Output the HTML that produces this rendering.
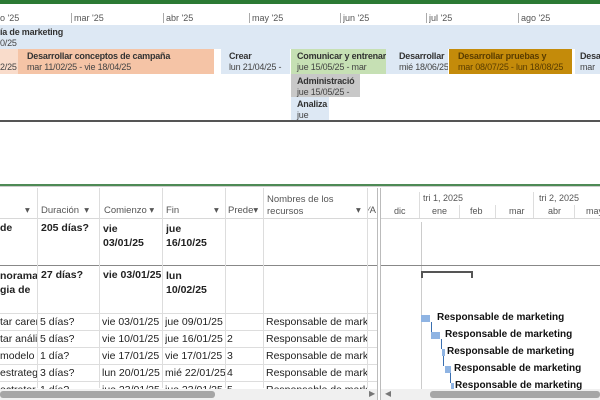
<!DOCTYPE html>
<html><head><meta charset="utf-8"><style>
*{margin:0;padding:0;box-sizing:border-box}
body{width:600px;height:400px;overflow:hidden;background:#fff;font-family:"Liberation Sans",sans-serif;position:relative;color:#222}
.a{position:absolute;white-space:nowrap;overflow:hidden}
.tl{font-size:9px;color:#555}
.bar{position:absolute;overflow:hidden;white-space:nowrap;font-size:9px;line-height:11px;padding:2px 0 0 5px;color:#444;letter-spacing:-0.2px}
.bar b{display:block;color:#333}
.c{position:absolute;font-size:10.5px;white-space:nowrap;overflow:hidden;color:#222}
.hd{font-size:9.5px;color:#555}
.g{position:absolute;font-size:10px;font-weight:bold;white-space:nowrap;color:#111}
.sq{position:absolute;width:9px;height:7px;background:#8fb4e3}
</style></head><body>
<div class="a" style="left:0;top:0;width:600px;height:4px;background:#2b7a34"></div>
<div class="a tl" style="left:0;top:13px">o '25</div>
<div class="a" style="left:71px;top:13px;width:1px;height:10px;background:#aaa"></div><div class="a tl" style="left:74px;top:13px">mar '25</div>
<div class="a" style="left:163px;top:13px;width:1px;height:10px;background:#aaa"></div><div class="a tl" style="left:166px;top:13px">abr '25</div>
<div class="a" style="left:249px;top:13px;width:1px;height:10px;background:#aaa"></div><div class="a tl" style="left:252px;top:13px">may '25</div>
<div class="a" style="left:340px;top:13px;width:1px;height:10px;background:#aaa"></div><div class="a tl" style="left:343px;top:13px">jun '25</div>
<div class="a" style="left:426px;top:13px;width:1px;height:10px;background:#aaa"></div><div class="a tl" style="left:429px;top:13px">jul '25</div>
<div class="a" style="left:518px;top:13px;width:1px;height:10px;background:#aaa"></div><div class="a tl" style="left:521px;top:13px">ago '25</div>
<div class="bar" style="left:0;top:25px;width:600px;height:24px;background:#dde8f4;padding-left:0"><b>ía de marketing</b>0/25</div>
<div class="bar" style="left:0;top:49px;width:18px;height:25px;background:#f9dccb;padding-left:0"><b>&nbsp;</b>2/25</div>
<div class="bar" style="left:18px;top:49px;width:196px;height:25px;background:#f5c4a6;padding-left:9px"><b>Desarrollar conceptos de campaña</b>mar 11/02/25 - vie 18/04/25</div>
<div class="bar" style="left:221px;top:49px;width:69px;height:25px;background:#dde8f4;padding-left:8px"><b>Crear</b>lun 21/04/25 -</div>
<div class="bar" style="left:291px;top:49px;width:95px;height:25px;background:#c6e0b4;padding-left:6px"><b>Comunicar y entrenar</b>jue 15/05/25 - mar</div>
<div class="bar" style="left:386px;top:49px;width:62px;height:25px;background:#dde8f4;padding-left:13px"><b>Desarrollar</b>mié 18/06/25</div>
<div class="bar" style="left:449px;top:49px;width:123px;height:25px;background:#c48b0a;padding-left:9px;color:#5a3d00"><b style="color:#5a3d00">Desarrollar pruebas y</b>mar 08/07/25 - lun 18/08/25</div>
<div class="bar" style="left:575px;top:49px;width:25px;height:25px;background:#dde8f4;padding-left:5px"><b>Desa</b>mar</div>
<div class="bar" style="left:291px;top:74px;width:69px;height:23px;background:#c8c8c8;padding-left:6px"><b>Administració</b>jue 15/05/25 -</div>
<div class="bar" style="left:291px;top:97px;width:38px;height:23px;background:#dde8f4;padding-left:6px"><b>Analiza</b>jue</div>
<div class="a" style="left:0;top:120px;width:600px;height:2px;background:#555"></div>
<div class="a" style="left:0;top:184px;width:600px;height:2px;background:#4e8a55"></div>
<div class="a" style="left:0;top:186px;width:600px;height:1px;background:#ccc"></div>
<div class="a" style="left:0;top:218px;width:377px;height:1px;background:#d8d8d8"></div>
<div class="a" style="left:0;top:265px;width:377px;height:1px;background:#888"></div>
<div class="a" style="left:0;top:313px;width:377px;height:1px;background:#ddd"></div>
<div class="a" style="left:0;top:330px;width:377px;height:1px;background:#ddd"></div>
<div class="a" style="left:0;top:347px;width:377px;height:1px;background:#ddd"></div>
<div class="a" style="left:0;top:364px;width:377px;height:1px;background:#ddd"></div>
<div class="a" style="left:0;top:381px;width:377px;height:1px;background:#ddd"></div>
<div class="a" style="left:37px;top:188px;width:1px;height:200px;background:#ddd"></div>
<div class="a" style="left:99px;top:188px;width:1px;height:200px;background:#ddd"></div>
<div class="a" style="left:162px;top:188px;width:1px;height:200px;background:#ddd"></div>
<div class="a" style="left:225px;top:188px;width:1px;height:200px;background:#ddd"></div>
<div class="a" style="left:263px;top:188px;width:1px;height:200px;background:#ddd"></div>
<div class="a" style="left:367px;top:188px;width:1px;height:200px;background:#ddd"></div>
<div class="a" style="left:377px;top:188px;width:1px;height:212px;background:#bbb"></div>
<div class="a" style="left:380px;top:188px;width:1px;height:212px;background:#bbb"></div>
<div class="c hd" style="left:25px;top:205px">▾</div>
<div class="c hd" style="left:41px;top:205px">Duración&nbsp;&nbsp;▾</div>
<div class="c hd" style="left:104px;top:205px">Comienzo ▾</div>
<div class="c hd" style="left:166px;top:205px">Fin</div><div class="c hd" style="left:214px;top:205px">▾</div>
<div class="c hd" style="left:228px;top:205px">Prede▾</div>
<div class="c hd" style="left:267px;top:194px;line-height:12px">Nombres de los<br>recursos</div><div class="c hd" style="left:356px;top:205px">▾</div>
<div class="c hd" style="left:368px;top:205px;width:9px">⁄A</div>
<div class="c" style="left:0;top:222px;font-weight:bold;line-height:13px">de<br>&nbsp;</div>
<div class="c" style="left:41px;top:222px;font-weight:bold">205 días?</div>
<div class="c" style="left:103px;top:222px;font-weight:bold;line-height:14px">vie<br>03/01/25</div>
<div class="c" style="left:166px;top:222px;font-weight:bold;line-height:14px">jue<br>16/10/25</div>
<div class="c" style="left:0;top:269px;font-weight:bold;line-height:14px;width:37px">norama<br>gia de</div>
<div class="c" style="left:41px;top:269px;font-weight:bold">27 días?</div>
<div class="c" style="left:103px;top:269px;font-weight:bold">vie 03/01/25</div>
<div class="c" style="left:166px;top:269px;font-weight:bold;line-height:14px">lun<br>10/02/25</div>
<div class="c" style="left:0;top:316px;width:37px">tar carer</div><div class="c" style="left:40px;top:316px">5 días?</div><div class="c" style="left:102px;top:316px;width:60px">vie 03/01/25</div><div class="c" style="left:165px;top:316px;width:60px">jue 09/01/25</div><div class="c" style="left:266px;top:316px;width:101px">Responsable de mark</div>
<div class="c" style="left:0;top:333px;width:37px">tar análi</div><div class="c" style="left:40px;top:333px">5 días?</div><div class="c" style="left:102px;top:333px;width:60px">vie 10/01/25</div><div class="c" style="left:165px;top:333px;width:60px">jue 16/01/25</div><div class="c" style="left:227px;top:333px">2</div><div class="c" style="left:266px;top:333px;width:101px">Responsable de mark</div>
<div class="c" style="left:0;top:350px;width:37px">modelo</div><div class="c" style="left:40px;top:350px">1 día?</div><div class="c" style="left:102px;top:350px;width:60px">vie 17/01/25</div><div class="c" style="left:165px;top:350px;width:60px">vie 17/01/25</div><div class="c" style="left:227px;top:350px">3</div><div class="c" style="left:266px;top:350px;width:101px">Responsable de mark</div>
<div class="c" style="left:0;top:367px;width:37px">estrateg</div><div class="c" style="left:40px;top:367px">3 días?</div><div class="c" style="left:102px;top:367px;width:60px">lun 20/01/25</div><div class="c" style="left:165px;top:367px;width:60px">mié 22/01/25</div><div class="c" style="left:227px;top:367px">4</div><div class="c" style="left:266px;top:367px;width:101px">Responsable de mark</div>
<div class="c" style="left:0;top:384px;width:37px;height:5px">ectrator</div><div class="c" style="left:40px;top:384px;height:5px">1 día?</div><div class="c" style="left:102px;top:384px;width:60px;height:5px">jue 23/01/25</div><div class="c" style="left:165px;top:384px;width:60px;height:5px">jue 23/01/25</div><div class="c" style="left:227px;top:384px;height:5px">5</div><div class="c" style="left:266px;top:384px;width:101px;height:5px">Responsable de mark</div>
<div class="a" style="left:0;top:389px;width:377px;height:11px;background:#f0f0f0"></div>
<div class="a" style="left:0;top:391px;width:215px;height:7px;background:#a6a6a6;border-radius:3px"></div>
<div class="a" style="left:369px;top:389px;font-size:8px;color:#777">▶</div>
<div class="a" style="left:381px;top:389px;width:219px;height:11px;background:#f0f0f0"></div>
<div class="a" style="left:385px;top:389px;font-size:8px;color:#777">◀</div>
<div class="a" style="left:430px;top:391px;width:170px;height:7px;background:#a6a6a6;border-radius:3px"></div>
<div class="a" style="left:381px;top:218px;width:219px;height:1px;background:#d8d8d8"></div>
<div class="a tl" style="left:423px;top:193px">tri 1, 2025</div>
<div class="a tl" style="left:539px;top:193px">tri 2, 2025</div>
<div class="a" style="left:419px;top:192px;width:1px;height:26px;background:#ddd"></div>
<div class="a" style="left:533px;top:192px;width:1px;height:26px;background:#ddd"></div>
<div class="a" style="left:459px;top:205px;width:1px;height:13px;background:#ddd"></div>
<div class="a" style="left:495px;top:205px;width:1px;height:13px;background:#ddd"></div>
<div class="a" style="left:574px;top:205px;width:1px;height:13px;background:#ddd"></div>
<div class="a tl" style="left:394px;top:206px">dic</div>
<div class="a tl" style="left:432px;top:206px">ene</div>
<div class="a tl" style="left:470px;top:206px">feb</div>
<div class="a tl" style="left:509px;top:206px">mar</div>
<div class="a tl" style="left:548px;top:206px">abr</div>
<div class="a tl" style="left:586px;top:206px">may</div>
<div class="a" style="left:421px;top:222px;width:1px;height:167px;background:#ccc"></div>
<div class="a" style="left:381px;top:265px;width:219px;height:1px;background:#888"></div>
<div class="a" style="left:421px;top:271px;width:52px;height:7px;border:2px solid #555;border-bottom:none"></div>
<div class="sq" style="left:421px;top:315px"></div>
<div class="sq" style="left:431px;top:332px"></div>
<div class="sq" style="left:442px;top:349px;width:3px"></div>
<div class="sq" style="left:445px;top:366px;width:6px"></div>
<div class="sq" style="left:451px;top:383px;width:3px;height:6px"></div>
<div class="a" style="left:431px;top:322px;width:1px;height:10px;background:#3a6fb0"></div>
<div class="a" style="left:441px;top:339px;width:1px;height:10px;background:#3a6fb0"></div>
<div class="a" style="left:443px;top:356px;width:1px;height:10px;background:#3a6fb0"></div>
<div class="a" style="left:450px;top:373px;width:1px;height:10px;background:#3a6fb0"></div>
<div class="g" style="left:437px;top:312px">Responsable de marketing</div>
<div class="g" style="left:445px;top:329px">Responsable de marketing</div>
<div class="g" style="left:447px;top:346px">Responsable de marketing</div>
<div class="g" style="left:454px;top:363px">Responsable de marketing</div>
<div class="g" style="left:455px;top:380px;height:9px">Responsable de marketing</div>
</body></html>
